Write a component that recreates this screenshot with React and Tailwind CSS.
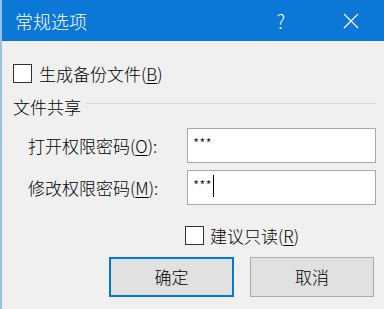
import React from 'react';

const font = { fontFamily: '"Noto Sans CJK SC", "Noto Sans", sans-serif' };

const Check = () => <div className="w-[19px] h-[19px] border border-[#333] bg-white shrink-0" />;

const Field = ({ label, hot, caret }) => (
    <div className="flex items-center h-[35px] pl-[26px]">
        <span className="w-[159px] text-[17px] text-black leading-none">
            {label}(<span className="underline underline-offset-2">{hot}</span>):
        </span>
        <div className="w-[189px] h-[35px] bg-white border border-[#a9a9a9] pl-[5px] pt-[4px] flex items-start">
            <span className="text-[14px] leading-[20px] tracking-[0px] text-black">***</span>
            {caret && <span className="w-px h-[22px] bg-black ml-[1px]" />}
        </div>
    </div>
);

export default function App() {
    return (
        <div className="w-[384px] h-[309px] bg-[#f0f0f0] border-l-2 border-[#9cc0e4] flex flex-col overflow-hidden font-light" style={font}>
            {/* Title bar */}
            <div className="h-[41px] bg-[#0b78d7] flex items-center text-white -ml-[2px] pl-[15px]">
                <span className="text-[18px] leading-none">常规选项</span>
                <span className="ml-auto mr-[58px] text-[19px] font-light leading-none">?</span>
                <svg width="16" height="16" viewBox="0 0 16 16" className="mr-[25px]">
                    <path d="M1 1L15 15M15 1L1 15" stroke="white" strokeWidth="1.2" />
                </svg>
            </div>

            {/* Backup checkbox */}
            <div className="flex items-center gap-[7px] mt-[23px] pl-[11px] h-[19px]">
                <Check />
                <span className="text-[17px] leading-none text-black">
                    生成备份文件(<span className="underline underline-offset-2">B</span>)
                </span>
            </div>

            {/* Group header */}
            <div className="flex items-center mt-[13px] pl-[11px] h-[20px]">
                <span className="text-[17px] leading-none text-black">文件共享</span>
                <div className="flex-1 h-px bg-[#d9d9d9] ml-[4px] mr-[8px] -mt-[6px]" />
            </div>

            {/* Passwords */}
            <div className="flex flex-col gap-[7px] mt-[12px]">
                <Field label="打开权限密码" hot="O" />
                <Field label="修改权限密码" hot="M" caret />
            </div>

            {/* Read-only */}
            <div className="flex items-center gap-[6px] mt-[21px] pl-[183px] h-[19px]">
                <Check />
                <span className="text-[17px] leading-none text-black">
                    建议只读(<span className="underline underline-offset-2">R</span>)
                </span>
            </div>

            {/* Buttons */}
            <div className="flex gap-[16px] mt-[12px] pl-[107px]">
                <button className="w-[125px] h-[40px] bg-[#e1e1e1] border-2 border-[#0078d7] text-[17px] text-black">确定</button>
                <button className="w-[124px] h-[40px] bg-[#e1e1e1] border border-[#adadad] text-[17px] text-black">取消</button>
            </div>
        </div>
    );
}
